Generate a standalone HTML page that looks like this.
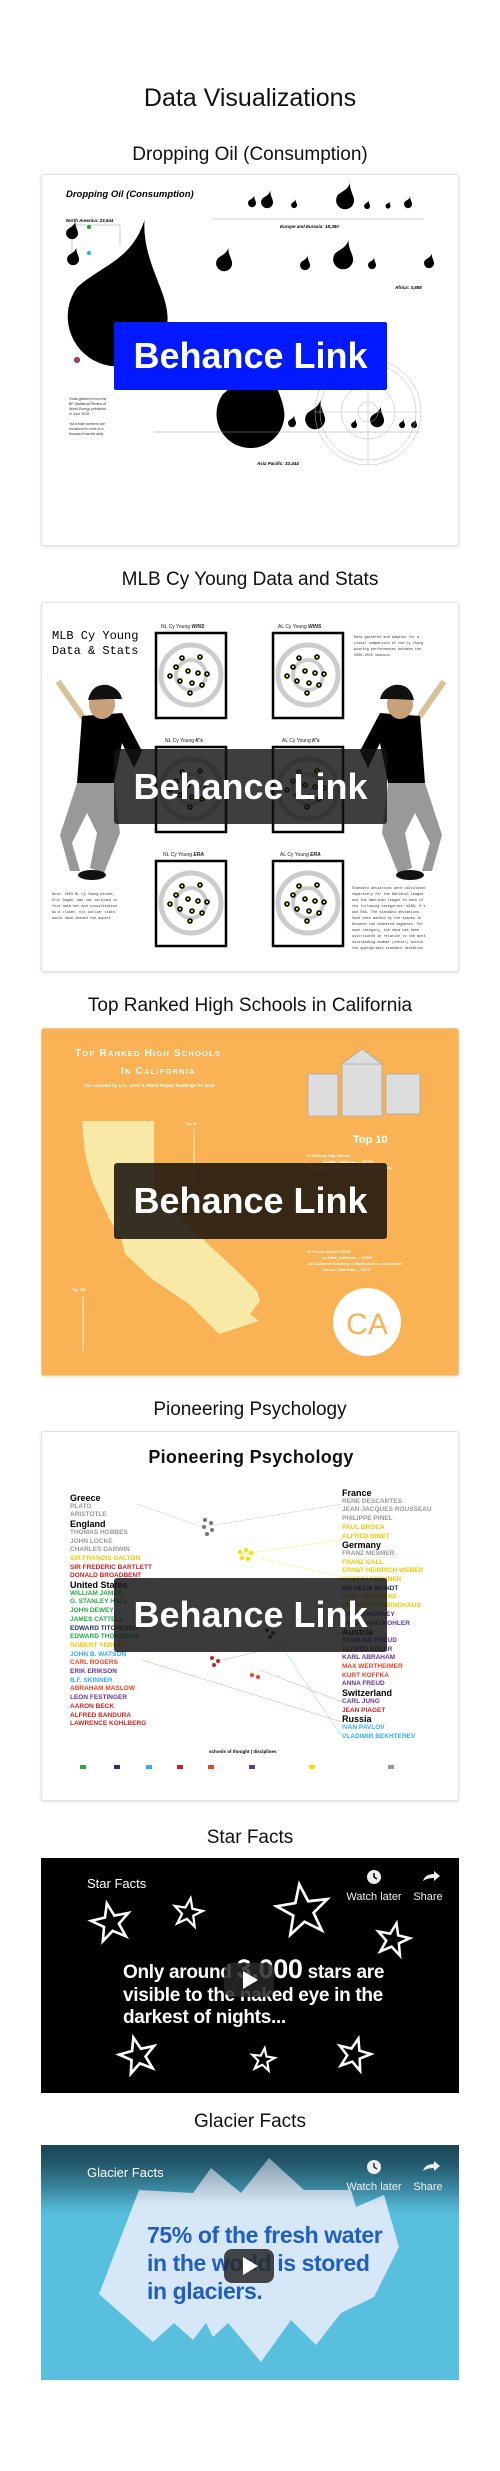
<!DOCTYPE html>
<html><head><meta charset="utf-8">
<style>
*{margin:0;padding:0;box-sizing:border-box}
body{width:500px;height:2471px;background:#fff;position:relative;font-family:"Liberation Sans",Arial,sans-serif;color:#111;overflow:hidden}
.t{position:absolute;left:0;width:500px;text-align:center;font-size:19px;line-height:22px}
.card{position:absolute;left:41px;width:418px;background:#fff;border:1px solid #e2e2e2;border-radius:3px;box-shadow:0 1px 3px rgba(0,0,0,.12);overflow:hidden}
.btn{position:absolute;left:72px;width:273px;color:#fff;font-weight:bold;font-size:36px;text-align:center;border-radius:3px}
.abs{position:absolute}
.ps{position:absolute;font-size:6.5px;line-height:8.7px;font-weight:bold;white-space:nowrap;font-family:"Liberation Sans",sans-serif}
.ps b{font-size:9px;color:#000;display:block;line-height:8.7px}
.vid{position:absolute;left:41px;width:418px;height:235px;overflow:hidden}
.vt{position:absolute;color:#fff;font-size:13px}
.vl{position:absolute;color:#eee;font-size:11px;text-align:center}
</style></head><body>

<div class="t" style="top:84px;font-size:25px;line-height:28px">Data Visualizations</div>

<div class="t" style="top:144px">Dropping Oil (Consumption)</div>
<div class="card" style="top:174px;height:372px">
<svg class="abs" style="left:0;top:0" width="418" height="372" viewBox="0 0 418 372">
<defs><path id="dr" d="M0.55,-1.9 C0.5,-1 1.1,-0.4 1,0.2 A1,1 0 1 1 -0.8,-0.55 C-0.3,-1 0.3,-1.1 0.55,-1.9Z"/></defs>
<text x="24" y="22" font-size="9.5" font-weight="bold" font-style="italic" font-family="Liberation Sans">Dropping Oil (Consumption)</text>
<text x="24" y="47" font-size="4.5" font-weight="bold" font-style="italic">North America: 23,644</text>
<line x1="30" y1="50" x2="78" y2="50" stroke="#999" stroke-width=".5"/>
<line x1="30" y1="50" x2="30" y2="90" stroke="#999" stroke-width=".5"/>
<line x1="78" y1="50" x2="78" y2="70" stroke="#999" stroke-width=".5"/>
<use href="#dr" transform="translate(30,58) scale(6)"/>
<use href="#dr" transform="translate(31,84) scale(6)"/>
<circle cx="47" cy="52" r="2" fill="#2a2"/><circle cx="47" cy="78" r="2" fill="#2af"/>
<use href="#dr" transform="translate(75,140) scale(50)"/>
<circle cx="35" cy="185" r="2.5" fill="#e33" stroke="#33a"/>
<use href="#dr" transform="translate(208,238) scale(34)"/>
<circle cx="158" cy="200" r="2" fill="#e42"/>
<g fill="#000">
<use href="#dr" transform="translate(210,28) scale(4)"/><use href="#dr" transform="translate(225,27) scale(6)"/>
<use href="#dr" transform="translate(252,30) scale(3)"/><use href="#dr" transform="translate(303,25) scale(9)"/>
<use href="#dr" transform="translate(325,31) scale(3)"/><use href="#dr" transform="translate(346,31) scale(2.5)"/><use href="#dr" transform="translate(366,29) scale(4)"/>
<use href="#dr" transform="translate(182,88) scale(8)"/><use href="#dr" transform="translate(263,90) scale(5)"/>
<use href="#dr" transform="translate(301,84) scale(10)"/><use href="#dr" transform="translate(330,90) scale(4)"/>
<use href="#dr" transform="translate(387,88) scale(5)"/>
<use href="#dr" transform="translate(225,244) scale(10)"/><use href="#dr" transform="translate(250,248) scale(4)"/>
<use href="#dr" transform="translate(273,244) scale(10)"/><use href="#dr" transform="translate(335,245) scale(7)"/>
<use href="#dr" transform="translate(312,250) scale(3)"/><use href="#dr" transform="translate(360,250) scale(3)"/><use href="#dr" transform="translate(372,250) scale(3)"/>
</g>
<line x1="170" y1="44" x2="382" y2="44" stroke="#999" stroke-width=".5"/>
<line x1="112" y1="257" x2="378" y2="257" stroke="#999" stroke-width=".5"/>
<text x="238" y="53" font-size="4.5" font-weight="bold" font-style="italic">Europe and Eurasia: 18,380</text>
<text x="353" y="114" font-size="4.5" font-weight="bold" font-style="italic">Africa: 3,888</text>
<text x="215" y="290" font-size="4.5" font-weight="bold" font-style="italic">Asia Pacific: 32,444</text>
<g fill="none" stroke="#bbb" stroke-width=".5"><circle cx="326" cy="237" r="53"/><circle cx="326" cy="237" r="48"/><circle cx="326" cy="237" r="27"/><circle cx="326" cy="237" r="10"/><line x1="273" y1="237" x2="379" y2="237"/><line x1="326" y1="184" x2="326" y2="290"/></g>
<g font-size="3.5" fill="#333"><text x="27" y="225">*Data gathered from the</text><text x="27" y="230">BP Statistical Review of</text><text x="27" y="235">World Energy published</text><text x="27" y="240">in June 2016</text><text x="27" y="250">*All whole numbers are</text><text x="27" y="255">measured in units of a</text><text x="27" y="260">thousand barrels daily</text></g>
</svg>
<div class="btn" style="top:147px;height:68px;line-height:68px;background:#0019ff;border-radius:2px">Behance Link</div>
</div>

<div class="t" style="top:569px">MLB Cy Young Data and Stats</div>
<div class="card" style="top:602px;height:370px">
<svg class="abs" style="left:0;top:0" width="418" height="370" viewBox="0 0 418 370">
<text x="10" y="36" font-size="12" font-family="Liberation Mono">MLB Cy Young</text>
<text x="10" y="51" font-size="12" font-family="Liberation Mono">Data &amp; Stats</text>
<g id="tg">
<rect x="114" y="30" width="70" height="85" fill="#fff" stroke="#000" stroke-width="2.5"/>
<circle cx="149" cy="72" r="30" fill="none" stroke="#ccc" stroke-width="5"/><circle cx="149" cy="72" r="15" fill="none" stroke="#ccc" stroke-width="4"/>
<g fill="#ee0" stroke="#000" stroke-width="1.6"><circle cx="140" cy="55" r="2"/><circle cx="158" cy="54" r="2"/><circle cx="128" cy="73" r="2"/><circle cx="146" cy="68" r="2"/><circle cx="156" cy="70" r="2"/><circle cx="165" cy="71" r="2"/><circle cx="138" cy="78" r="2"/><circle cx="150" cy="80" r="2"/><circle cx="160" cy="82" r="2"/><circle cx="148" cy="90" r="2"/><circle cx="134" cy="64" r="2"/></g>
</g>
<use href="#tg" transform="translate(117,0)"/><use href="#tg" transform="translate(0,114)"/><use href="#tg" transform="translate(117,114)"/><use href="#tg" transform="translate(0,228)"/><use href="#tg" transform="translate(117,228)"/>
<g font-size="5" fill="#222"><text x="119" y="25">NL Cy Young <tspan font-weight="bold" font-style="italic">WINS</tspan></text><text x="236" y="25">AL Cy Young <tspan font-weight="bold" font-style="italic">WINS</tspan></text><text x="123" y="139">NL Cy Young <tspan font-weight="bold" font-style="italic">K's</tspan></text><text x="240" y="139">AL Cy Young <tspan font-weight="bold" font-style="italic">K's</tspan></text><text x="121" y="253">NL Cy Young <tspan font-weight="bold" font-style="italic">ERA</tspan></text><text x="238" y="253">AL Cy Young <tspan font-weight="bold" font-style="italic">ERA</tspan></text></g>
<g id="pl">
<rect x="40" y="70" width="6" height="95" fill="#d8c29a" transform="rotate(-35 43 117)"/>
<path d="M40 113 L80 110 L100 148 L92 165 L80 140 L72 180 L35 180 Z" fill="#000"/>
<path d="M35 180 L72 180 L78 230 L62 270 L48 265 L55 230 L45 210 L30 240 L38 268 L28 268 L18 232 Z" fill="#999"/>
<ellipse cx="60" cy="101" rx="13" ry="15" fill="#c8a07a"/>
<path d="M46 97 Q50 80 66 82 Q78 86 80 96 L66 96 Z" fill="#111"/>
<ellipse cx="50" cy="272" rx="14" ry="5" fill="#111"/>
</g>
<use href="#pl" transform="translate(418,0) scale(-1,1)"/>
<g font-size="3.5" font-family="Liberation Mono" fill="#333"><text x="312" y="35">Data gathered and adapted for a</text><text x="312" y="41">visual comparison of the Cy Young</text><text x="312" y="47">winning performances between the</text><text x="312" y="53">2000-2015 seasons.</text>
<text x="10" y="292">Note: 2003 NL Cy Young winner,</text><text x="10" y="298">Eric Gagne, was not included in</text><text x="10" y="304">this data set and visualization.</text><text x="10" y="310">As a closer, his outlier stats</text><text x="10" y="316">would have skewed the aspect</text>
<text x="310" y="286">Standard deviations were calculated</text><text x="310" y="292">separately for the National League</text><text x="310" y="298">and the American League in each of</text><text x="310" y="304">the following categories: WINS, K's</text><text x="310" y="310">and ERA. The standard deviations</text><text x="310" y="316">have been marked by the spaces in</text><text x="310" y="322">between the numbered segments. For</text><text x="310" y="328">each category, the data has been</text><text x="310" y="334">distributed in relation to the most</text><text x="310" y="340">outstanding number (center) within</text><text x="310" y="346">the appropriate standard deviation</text></g>
</svg>
<div class="btn" style="top:146px;height:75px;line-height:75px;background:rgba(20,20,20,.82)">Behance Link</div>
</div>

<div class="t" style="top:995px">Top Ranked High Schools in California</div>
<div class="card" style="top:1028px;height:348px;background:#f9b254;border-color:#f0c890">
<svg class="abs" style="left:0;top:0" width="418" height="348" viewBox="0 0 418 348">
<text x="33" y="27" font-size="10" fill="#fff" font-weight="bold" letter-spacing="1.2">T<tspan font-size="7.5">OP</tspan> R<tspan font-size="7.5">ANKED</tspan> H<tspan font-size="7.5">IGH</tspan> S<tspan font-size="7.5">CHOOLS</tspan></text>
<text x="79" y="45" font-size="10" fill="#fff" font-weight="bold" letter-spacing="1.2">I<tspan font-size="7.5">N</tspan> C<tspan font-size="7.5">ALIFORNIA</tspan></text>
<text x="42" y="58" font-size="4.5" fill="#fff" font-weight="bold">*As reported by U.S. News &amp; World Report Rankings for 2016</text>
<path d="M40 92 L112 92 L112 163 L150 200 L195 242 L215 262 L218 272 L208 285 L217 292 L177 305 L147 275 L110 250 L83 225 L80 212 L67 189 L50 152 L43 125 Z" fill="#f8e9a6"/>
<g fill="#ddd" stroke="#aaa" stroke-width=".8"><rect x="266" y="45" width="30" height="42"/><rect x="300" y="35" width="40" height="52"/><rect x="344" y="45" width="34" height="40"/><path d="M300 35 L320 20 L340 35Z"/></g>
<text x="311" y="114" font-size="11" fill="#fff" font-weight="bold">Top 10</text>
<g font-size="3.8" fill="#fff" font-weight="bold"><text x="265" y="128">#1 Whitney High School</text><text x="280" y="134">Cerritos, California — 90703</text><text x="265" y="140">#2 Stockton Collegiate International Secondary</text><text x="265" y="224">#9 Preuss School UCSD</text><text x="280" y="230">La Jolla, California — 92093</text><text x="265" y="236">#10 California Academy of Mathematics and Science</text><text x="280" y="242">Carson, California — 90747</text><text x="143" y="96">Top 50</text><text x="30" y="262">Top 100</text></g>
<line x1="152" y1="100" x2="152" y2="155" stroke="#fff" stroke-width=".8"/><line x1="41" y1="268" x2="41" y2="322" stroke="#fff" stroke-width=".8"/>
<circle cx="325" cy="293" r="34" fill="#fff"/>
<text x="325" y="305" font-size="30" fill="#f9b254" text-anchor="middle">CA</text>
</svg>
<div class="btn" style="top:134px;height:76px;line-height:76px;background:rgba(20,15,10,.85)">Behance Link</div>
</div>

<div class="t" style="top:1399px">Pioneering Psychology</div>
<div class="card" style="top:1431px;height:370px">
<div class="abs" style="left:0;width:418px;top:15px;text-align:center;font-size:18px;font-weight:bold;letter-spacing:.3px">Pioneering Psychology</div>
<svg class="abs" style="left:0;top:0" width="418" height="370" viewBox="0 0 418 370">
<g stroke-width=".5" opacity=".6"><line x1="95" y1="72" x2="160" y2="95" stroke="#aaa"/><line x1="160" y1="95" x2="300" y2="72" stroke="#aaa"/><line x1="200" y1="122" x2="300" y2="108" stroke="#fd0"/><line x1="200" y1="122" x2="300" y2="145" stroke="#fd0"/><line x1="180" y1="228" x2="300" y2="200" stroke="#e55"/><line x1="218" y1="238" x2="300" y2="270" stroke="#e55"/><line x1="100" y1="228" x2="300" y2="290" stroke="#e55"/><line x1="230" y1="200" x2="300" y2="305" stroke="#3af"/></g>
<g fill="#777"><circle cx="163" cy="88" r="2"/><circle cx="169" cy="91" r="2"/><circle cx="162" cy="95" r="2"/><circle cx="170" cy="98" r="2"/><circle cx="165" cy="102" r="2"/></g>
<g fill="#fd0"><circle cx="198" cy="120" r="2.2"/><circle cx="204" cy="118" r="2.2"/><circle cx="209" cy="121" r="2.2"/><circle cx="200" cy="126" r="2.2"/><circle cx="206" cy="127" r="2.2"/></g>
<g fill="#c22"><circle cx="170" cy="226" r="2"/><circle cx="176" cy="229" r="2"/><circle cx="172" cy="233" r="2"/></g>
<g fill="#e42"><circle cx="210" cy="243" r="2"/><circle cx="216" cy="245" r="2"/></g>
<g fill="#333"><circle cx="225" cy="198" r="2"/><circle cx="231" cy="201" r="2"/><circle cx="228" cy="205" r="2"/></g>
<text x="167" y="321" font-size="4.5" font-weight="bold">schools of thought  |  disciplines</text>
<g><rect x="38" y="333" width="6" height="4" fill="#2a4"/><rect x="72" y="333" width="6" height="4" fill="#236"/><rect x="104" y="333" width="6" height="4" fill="#3af"/><rect x="135" y="333" width="6" height="4" fill="#c22"/><rect x="166" y="333" width="6" height="4" fill="#e42"/><rect x="207" y="333" width="6" height="4" fill="#639"/><rect x="267" y="333" width="6" height="4" fill="#fd0"/><rect x="346" y="333" width="6" height="4" fill="#999"/></g>
</svg>
<div class="ps" style="left:28px;top:62px">
<b>Greece</b><span style="color:#999">PLATO</span><br><span style="color:#999">ARISTOTLE</span><br><b>England</b><span style="color:#999">THOMAS HOBBES</span><br><span style="color:#999">JOHN LOCKE</span><br><span style="color:#999">CHARLES DARWIN</span><br><span style="color:#f5c800">SIR FRANCIS GALTON</span><br><span style="color:#c22">SIR FREDERIC BARTLETT</span><br><span style="color:#c22">DONALD BROADBENT</span><br><b>United States</b><span style="color:#2a4">WILLIAM JAMES</span><br><span style="color:#2a4">G. STANLEY HALL</span><br><span style="color:#2a4">JOHN DEWEY</span><br><span style="color:#2a4">JAMES CATTELL</span><br><span style="color:#236">EDWARD TITCHENER</span><br><span style="color:#2a4">EDWARD THORNDIKE</span><br><span style="color:#f5c800">ROBERT YERKES</span><br><span style="color:#3af">JOHN B. WATSON</span><br><span style="color:#e42">CARL ROGERS</span><br><span style="color:#639">ERIK ERIKSON</span><br><span style="color:#3af">B.F. SKINNER</span><br><span style="color:#e42">ABRAHAM MASLOW</span><br><span style="color:#639">LEON FESTINGER</span><br><span style="color:#c22">AARON BECK</span><br><span style="color:#c22">ALFRED BANDURA</span><br><span style="color:#c22">LAWRENCE KOHLBERG</span>
</div>
<div class="ps" style="left:300px;top:57px">
<b>France</b><span style="color:#999">RENE DESCARTES</span><br><span style="color:#999">JEAN-JACQUES ROUSSEAU</span><br><span style="color:#999">PHILIPPE PINEL</span><br><span style="color:#f5c800">PAUL BROCA</span><br><span style="color:#f5c800">ALFRED BINET</span><br><b>Germany</b><span style="color:#999">FRANZ MESMER</span><br><span style="color:#f5c800">FRANZ GALL</span><br><span style="color:#f5c800">ERNST HEINRICH WEBER</span><br><span style="color:#f5c800">GUSTAV FECHNER</span><br><span style="color:#236">WILHELM WUNDT</span><br><span style="color:#f5c800">CARL WERNICKE</span><br><span style="color:#f5c800">HERMANN EBBINGHAUS</span><br><span style="color:#639">KAREN HORNEY</span><br><span style="color:#639">WOLFGANG KOHLER</span><br><b>Austria</b><span style="color:#639">SIGMUND FREUD</span><br><span style="color:#639">ALFRED ADLER</span><br><span style="color:#639">KARL ABRAHAM</span><br><span style="color:#e42">MAX WERTHEIMER</span><br><span style="color:#e42">KURT KOFFKA</span><br><span style="color:#639">ANNA FREUD</span><br><b>Switzerland</b><span style="color:#639">CARL JUNG</span><br><span style="color:#c22">JEAN PIAGET</span><br><b>Russia</b><span style="color:#3af">IVAN PAVLOV</span><br><span style="color:#3af">VLADIMIR BEKHTEREV</span>
</div>
<div class="btn" style="top:146px;height:74px;line-height:74px;background:rgba(25,25,25,.85)">Behance Link</div>
</div>

<div class="t" style="top:1827px">Star Facts</div>
<div class="vid" style="top:1858px;background:#000">
<svg class="abs" style="left:0;top:0" width="418" height="235" viewBox="0 0 418 235">
<defs><path id="st" d="M0,-1 L0.24,-0.33 0.95,-0.31 0.38,0.12 0.59,0.81 0,0.4 -0.59,0.81 -0.38,0.12 -0.95,-0.31 -0.24,-0.33Z"/></defs>
<g fill="none" stroke="#fff">
<use href="#st" transform="translate(70,65) scale(20) rotate(-12)" stroke-width=".13"/>
<use href="#st" transform="translate(147,55) scale(15) rotate(10)" stroke-width=".15"/>
<use href="#st" transform="translate(262,53) scale(27) rotate(-8)" stroke-width=".1"/>
<use href="#st" transform="translate(352,82) scale(17) rotate(12)" stroke-width=".15"/>
<use href="#st" transform="translate(97,198) scale(19) rotate(-14)" stroke-width=".14"/>
<use href="#st" transform="translate(222,202) scale(12) rotate(8)" stroke-width=".18"/>
<use href="#st" transform="translate(313,197) scale(17) rotate(15)" stroke-width=".15"/>
</g>
</svg>
<div class="abs" style="left:82px;top:100px;color:#fff;font-weight:bold;font-size:19px;line-height:22.5px;letter-spacing:-.3px">Only around <span style="font-size:27px">3,000</span> stars are<br>visible to the naked eye in the<br>darkest of nights...</div>
<div class="abs" style="left:183px;top:105px;width:50px;height:34px;border-radius:8px;background:rgba(40,40,40,.85)"></div>
<div class="abs" style="left:202px;top:113px;width:0;height:0;border-left:15px solid #fff;border-top:9px solid transparent;border-bottom:9px solid transparent"></div>
<div class="vt" style="left:46px;top:18px">Star Facts</div>
<svg class="abs" style="left:324px;top:10px" width="90" height="18"><circle cx="9" cy="9" r="7" fill="#eee"/><path d="M9 5 V9 L12 11" stroke="#000" stroke-width="1.5" fill="none"/><path d="M58 13 Q60 6 69 6 V3 L75 8 L69 13 V10 Q62 10 58 13Z" fill="#eee"/></svg>
<div class="vl" style="left:300px;top:33px;width:66px">Watch later</div>
<div class="vl" style="left:367px;top:33px;width:40px">Share</div>
</div>

<div class="t" style="top:2111px">Glacier Facts</div>
<div class="vid" style="top:2145px;background:#58bfdf">
<div class="abs" style="left:0;top:0;width:418px;height:70px;background:linear-gradient(#1f4f60,rgba(88,191,223,0))"></div>
<svg class="abs" style="left:0;top:0" width="418" height="235" viewBox="0 0 418 235">
<polygon points="58,149 98,45 152,48 170,23 200,48 228,13 263,45 310,45 315,62 343,50 358,102 333,152 300,168 275,200 250,175 220,217 187,178 172,192 165,178 152,195 133,178 112,197" fill="#dde9f8" opacity=".95"/>
</svg>
<div class="abs" style="left:0;top:0;width:418px;height:60px;background:linear-gradient(rgba(20,60,75,.55),rgba(88,191,223,0))"></div>
<div class="abs" style="left:106px;top:76px;color:#1f5fc4;font-weight:bold;font-size:23px;line-height:28px;letter-spacing:-.4px">75% of the fresh water<br>in the world is stored<br>in glaciers.</div>
<div class="abs" style="left:183px;top:104px;width:50px;height:34px;border-radius:8px;background:rgba(40,40,40,.85)"></div>
<div class="abs" style="left:202px;top:112px;width:0;height:0;border-left:15px solid #fff;border-top:9px solid transparent;border-bottom:9px solid transparent"></div>
<div class="vt" style="left:46px;top:20px">Glacier Facts</div>
<svg class="abs" style="left:324px;top:13px" width="90" height="18"><circle cx="9" cy="9" r="7" fill="#eee"/><path d="M9 5 V9 L12 11" stroke="#333" stroke-width="1.5" fill="none"/><path d="M58 13 Q60 6 69 6 V3 L75 8 L69 13 V10 Q62 10 58 13Z" fill="#eee"/></svg>
<div class="vl" style="left:300px;top:36px;width:66px">Watch later</div>
<div class="vl" style="left:367px;top:36px;width:40px">Share</div>
</div>

</body></html>
